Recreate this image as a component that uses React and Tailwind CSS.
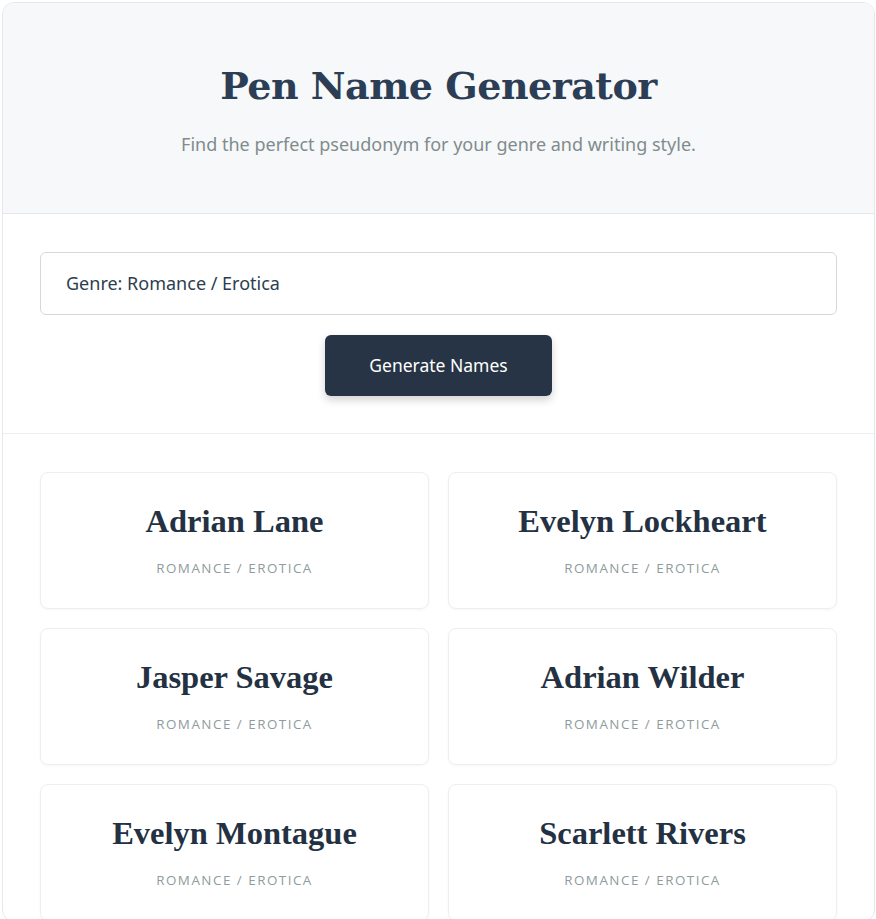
const names = [
  "Adrian Lane",
  "Evelyn Lockheart",
  "Jasper Savage",
  "Adrian Wilder",
  "Evelyn Montague",
  "Scarlett Rivers",
];

const App = () => {
  return (
    <div className="min-h-screen bg-white overflow-hidden">
      <div className="ml-[2px] mt-[2px] w-[873px] border border-[#e6e8eb] rounded-xl overflow-hidden">
        <header className="bg-[#f7f8fa] border-b border-[#e6e8eb] h-[211px] flex flex-col items-center pt-[55px]">
          <h1 className="font-['DejaVu_Serif',serif] font-bold text-[38px] leading-[56px] text-[#2c3e55] tracking-[-0.5px]">
            Pen Name Generator
          </h1>
          <p className="mt-[17px] font-['Noto_Sans',sans-serif] text-[18px] text-[#7f8c8d]">
            Find the perfect pseudonym for your genre and writing style.
          </p>
        </header>

        <div className="px-[37px] pt-[38px] pb-[37px] border-b border-[#eceef0] flex flex-col items-center gap-[20px]">
          <div className="w-full h-[63px] border border-[#d6d9dc] rounded-md flex items-center px-[25px] font-['Noto_Sans',sans-serif] text-[18px] text-[#2c3e50]">
            Genre: Romance / Erotica
          </div>
          <button className="w-[227px] h-[61px] rounded-md bg-[#263445] text-white font-['Noto_Sans',sans-serif] text-[17.5px] shadow-[0_4px_8px_rgba(0,0,0,0.18)]">
            Generate Names
          </button>
        </div>

        <div className="px-[37px] pt-[38px] grid grid-cols-2 gap-[19px]">
          {names.map((n) => (
            <div
              key={n}
              className="h-[137px] border border-[#eceef0] rounded-lg shadow-[0_1px_3px_rgba(0,0,0,0.04)] flex flex-col items-center pt-[30px]"
            >
              <div className="font-['Liberation_Serif',serif] font-bold text-[32.5px] leading-[36px] text-[#233142]">
                {n}
              </div>
              <div className="mt-[19px] font-['Open_Sans',sans-serif] text-[13.4px] tracking-[1.5px] text-[#8e9c9d] uppercase">
                Romance / Erotica
              </div>
            </div>
          ))}
        </div>
      </div>
    </div>
  );
};

export default App;
